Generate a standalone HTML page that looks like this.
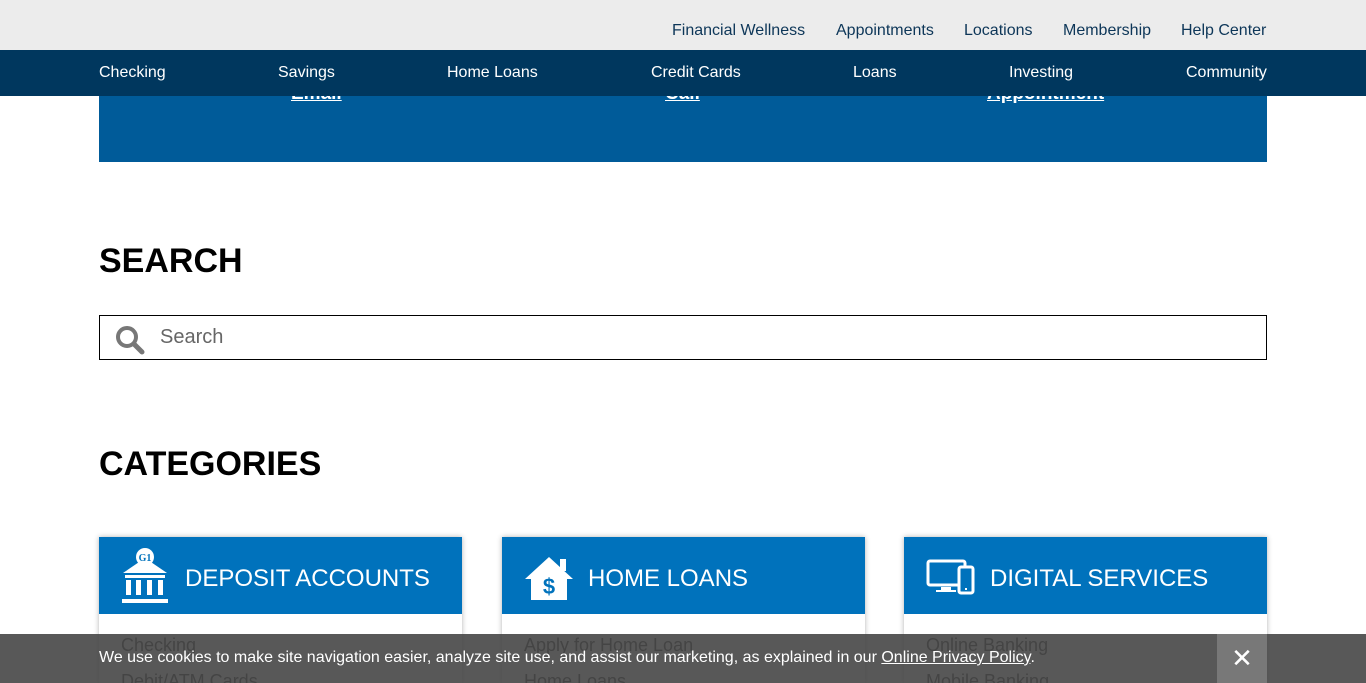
<!DOCTYPE html>
<html style="width:1366px;height:683px;overflow:hidden"><head><meta charset="utf-8"><style>
*{margin:0;padding:0;box-sizing:border-box}
body{width:1366px;height:683px;overflow:hidden;background:#fff;font-family:"Liberation Sans",Arial,sans-serif;position:relative}
.top{position:absolute;top:0;left:0;width:1366px;height:50px;background:#ececec;z-index:3}
.top a{position:absolute;top:22px;font-size:16px;color:#0d3658;text-decoration:none}
.nav{position:absolute;top:50px;left:0;width:1366px;height:46px;background:#00375e;z-index:3}
.nav a{position:absolute;top:14px;font-size:16px;color:#fff;text-decoration:none}
.hero{position:absolute;top:60px;left:99px;width:1168px;height:102px;background:#005b99}
.hero a{position:absolute;top:23px;font-size:19px;font-weight:bold;color:#fff;text-decoration:underline}
h2{position:absolute;left:99px;font-size:34px;font-weight:bold;color:#000}
.search{position:absolute;left:99px;top:315px;width:1168px;height:45px;border:1px solid #000}
.search span{position:absolute;left:60px;top:10px;font-size:20px;color:#666}
.card{position:absolute;top:537px;width:363px;height:146px;overflow:hidden;background:#fff;box-shadow:0 0 5px rgba(0,0,0,.3)}
.card .h{height:77px;background:#0072bc;position:relative}
.card .h span{position:absolute;left:86px;top:28px;font-size:24px;color:#fff}
.card .h svg{position:absolute}
.card p{position:absolute;left:22px;font-size:18px;color:#333}
.cookie{position:absolute;top:634px;left:0;width:1366px;height:49px;background:rgba(70,70,70,.9);z-index:5}
.cookie .t{position:absolute;left:99px;top:15px;font-size:16px;color:#fff}
.cookie .t u{color:#fff}
.cookie .x{position:absolute;left:1217px;top:0;width:50px;height:49px;background:#787878;color:#fff;font-size:26px;text-align:center;line-height:48px}
</style></head><body>
<div class="top">
<a style="left:672px">Financial Wellness</a><a style="left:836px">Appointments</a><a style="left:964px">Locations</a><a style="left:1063px">Membership</a><a style="left:1181px">Help Center</a>
</div>
<div class="nav">
<a style="left:99px">Checking</a><a style="left:278px">Savings</a><a style="left:447px">Home Loans</a><a style="left:651px">Credit Cards</a><a style="left:853px">Loans</a><a style="left:1009px">Investing</a><a style="left:1186px">Community</a>
</div>
<div class="hero">
<a style="left:192px">Email</a><a style="left:566px">Call</a><a style="left:888px">Appointment</a>
</div>
<h2 style="top:242px">SEARCH</h2>
<div class="search">
<svg style="position:absolute;left:14px;top:8px" width="32" height="32" viewBox="0 0 32 32"><circle cx="13" cy="13" r="9" fill="none" stroke="#777" stroke-width="4"/><line x1="20" y1="20" x2="28" y2="28" stroke="#777" stroke-width="5" stroke-linecap="round"/></svg>
<span>Search</span></div>
<h2 style="top:445px">CATEGORIES</h2>
<div class="card" style="left:99px"><div class="h">
<svg style="left:22px;top:11px" width="48" height="58" viewBox="0 0 48 58"><polygon points="24,10 2,25 46,25" fill="#fff"/><circle cx="24" cy="9" r="9" fill="#fff"/><text x="24" y="13" font-size="10" font-weight="bold" fill="#0072bc" text-anchor="middle" font-family="Liberation Serif">G1</text><rect x="4" y="27" width="40" height="3" fill="#fff"/><rect x="5" y="32" width="5" height="15" fill="#fff"/><rect x="15" y="32" width="5" height="15" fill="#fff"/><rect x="26" y="32" width="5" height="15" fill="#fff"/><rect x="37" y="32" width="5" height="15" fill="#fff"/><rect x="1" y="51" width="46" height="4" fill="#fff"/></svg>
<span>DEPOSIT ACCOUNTS</span></div>
<p style="top:98px">Checking</p><p style="top:134px">Debit/ATM Cards</p></div>
<div class="card" style="left:502px"><div class="h">
<svg style="left:22px;top:18px" width="50" height="46" viewBox="0 0 50 46"><polygon points="25,2 1,24 7,24 7,45 43,45 43,24 49,24" fill="#fff"/><rect x="36" y="4" width="6" height="12" fill="#fff"/><text x="25" y="39" font-size="22" font-weight="bold" fill="#0072bc" text-anchor="middle">$</text></svg>
<span>HOME LOANS</span></div>
<p style="top:98px">Apply for Home Loan</p><p style="top:134px">Home Loans</p></div>
<div class="card" style="left:904px"><div class="h">
<svg style="left:22px;top:22px" width="50" height="36" viewBox="0 0 50 36"><rect x="2" y="2" width="37" height="24" rx="2" fill="none" stroke="#fff" stroke-width="3"/><rect x="15" y="28" width="10" height="3" fill="#fff"/><rect x="10" y="31" width="20" height="2" fill="#fff"/><rect x="33" y="8" width="14" height="26" rx="2" fill="#0072bc" stroke="#fff" stroke-width="3"/><rect x="39" y="29" width="2" height="2" fill="#fff"/></svg>
<span>DIGITAL SERVICES</span></div>
<p style="top:98px">Online Banking</p><p style="top:134px">Mobile Banking</p></div>
<div class="cookie"><div class="t">We use cookies to make site navigation easier, analyze site use, and assist our marketing, as explained in our <u>Online Privacy Policy</u>.</div><div class="x">✕</div></div>
</body></html>
